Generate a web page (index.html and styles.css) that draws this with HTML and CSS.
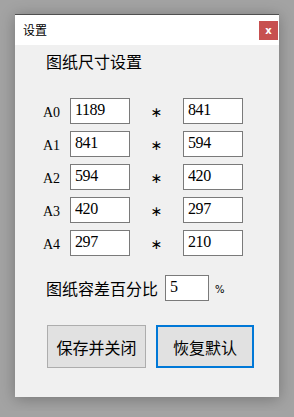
FILE: index.html
```html
<!DOCTYPE html>
<html lang="zh-CN">
<head>
    <meta charset="UTF-8">
    <title>设置</title>
    <link rel="stylesheet" href="styles.css">
</head>
<body>
    <div class="window">
        <div class="titlebar">
            <span class="title">设置</span>
            <button class="close">x</button>
        </div>

        <div class="content">
            <h1 class="heading">图纸尺寸设置</h1>

            <div class="sizes">
                <div class="size-row">
                    <span class="size-name">A0</span>
                    <input class="field" type="text" value="1189">
                    <span class="times">∗</span>
                    <input class="field" type="text" value="841">
                </div>
                <div class="size-row">
                    <span class="size-name">A1</span>
                    <input class="field" type="text" value="841">
                    <span class="times">∗</span>
                    <input class="field" type="text" value="594">
                </div>
                <div class="size-row">
                    <span class="size-name">A2</span>
                    <input class="field" type="text" value="594">
                    <span class="times">∗</span>
                    <input class="field" type="text" value="420">
                </div>
                <div class="size-row">
                    <span class="size-name">A3</span>
                    <input class="field" type="text" value="420">
                    <span class="times">∗</span>
                    <input class="field" type="text" value="297">
                </div>
                <div class="size-row">
                    <span class="size-name">A4</span>
                    <input class="field" type="text" value="297">
                    <span class="times">∗</span>
                    <input class="field" type="text" value="210">
                </div>
            </div>

            <div class="tolerance">
                <span class="tolerance-label">图纸容差百分比</span>
                <input class="field field-small" type="text" value="5">
                <span class="percent">%</span>
            </div>

            <div class="actions">
                <button class="btn">保存并关闭</button>
                <button class="btn btn-default">恢复默认</button>
            </div>
        </div>
    </div>
</body>
</html>
```

FILE: styles.css
```css
body {
    margin: 0;
    padding: 14px 15px;
    background-color: #a3a3a3;
    font-family: "Noto Sans CJK SC", "Liberation Sans", sans-serif;
    color: #000000;
}

.window {
    width: 264px;
    height: 383px;
    box-sizing: border-box;
    background-color: #f0f0f0;
    border-top: 1px solid #4f4f4f;
    box-shadow: 0 2px 14px rgba(0, 0, 0, 0.28);
    display: flex;
    flex-direction: column;
}

.titlebar {
    height: 30px;
    background-color: #ffffff;
    display: flex;
    align-items: center;
    justify-content: space-between;
    padding-left: 8px;
}

.title {
    font-size: 12px;
    line-height: 14px;
}

.close {
    width: 19px;
    height: 19px;
    margin-right: 1px;
    padding: 0;
    border: none;
    background-color: #c75050;
    color: #ffffff;
    font-family: "DejaVu Sans", sans-serif;
    font-size: 10px;
    font-weight: bold;
    line-height: 19px;
}

.content {
    padding-left: 28px;
}

.heading {
    margin: 6px 0 0 3px;
    font-size: 16px;
    font-weight: normal;
    line-height: 20px;
}

.sizes {
    margin-top: 27px;
    display: flex;
    flex-direction: column;
    gap: 7px;
}

.size-row {
    display: flex;
    align-items: center;
    height: 26px;
}

.size-name {
    width: 27px;
    padding-top: 3px;
    font-family: "Liberation Serif", serif;
    font-size: 14px;
}

.times {
    width: 53px;
    text-align: center;
    font-family: "DejaVu Sans", sans-serif;
    font-size: 14px;
    padding-top: 1px;
}

.field {
    width: 60px;
    height: 26px;
    box-sizing: border-box;
    margin: 0;
    padding: 0 3px 3px 4px;
    border: 1px solid #7a7a7a;
    background-color: #ffffff;
    font-family: "Liberation Serif", serif;
    font-size: 16px;
    letter-spacing: -0.4px;
    color: #000000;
    outline: none;
}

.field-small {
    width: 44px;
}

.tolerance {
    margin: 19px 0 0 3px;
    display: flex;
    align-items: center;
    height: 26px;
}

.tolerance-label {
    font-size: 16px;
    margin-right: 7px;
}

.percent {
    margin-left: 6px;
    font-family: "DejaVu Sans", sans-serif;
    font-size: 10px;
    padding-top: 2px;
}

.actions {
    margin: 24px 0 0 4px;
    display: flex;
    gap: 10px;
}

.btn {
    width: 99px;
    height: 43px;
    box-sizing: border-box;
    border: 1px solid #adadad;
    background-color: #e1e1e1;
    font-family: "Noto Sans CJK SC", sans-serif;
    font-size: 16px;
    color: #000000;
    padding: 0;
}

.btn-default {
    width: 98px;
    border: 2px solid #0078d7;
}
```
